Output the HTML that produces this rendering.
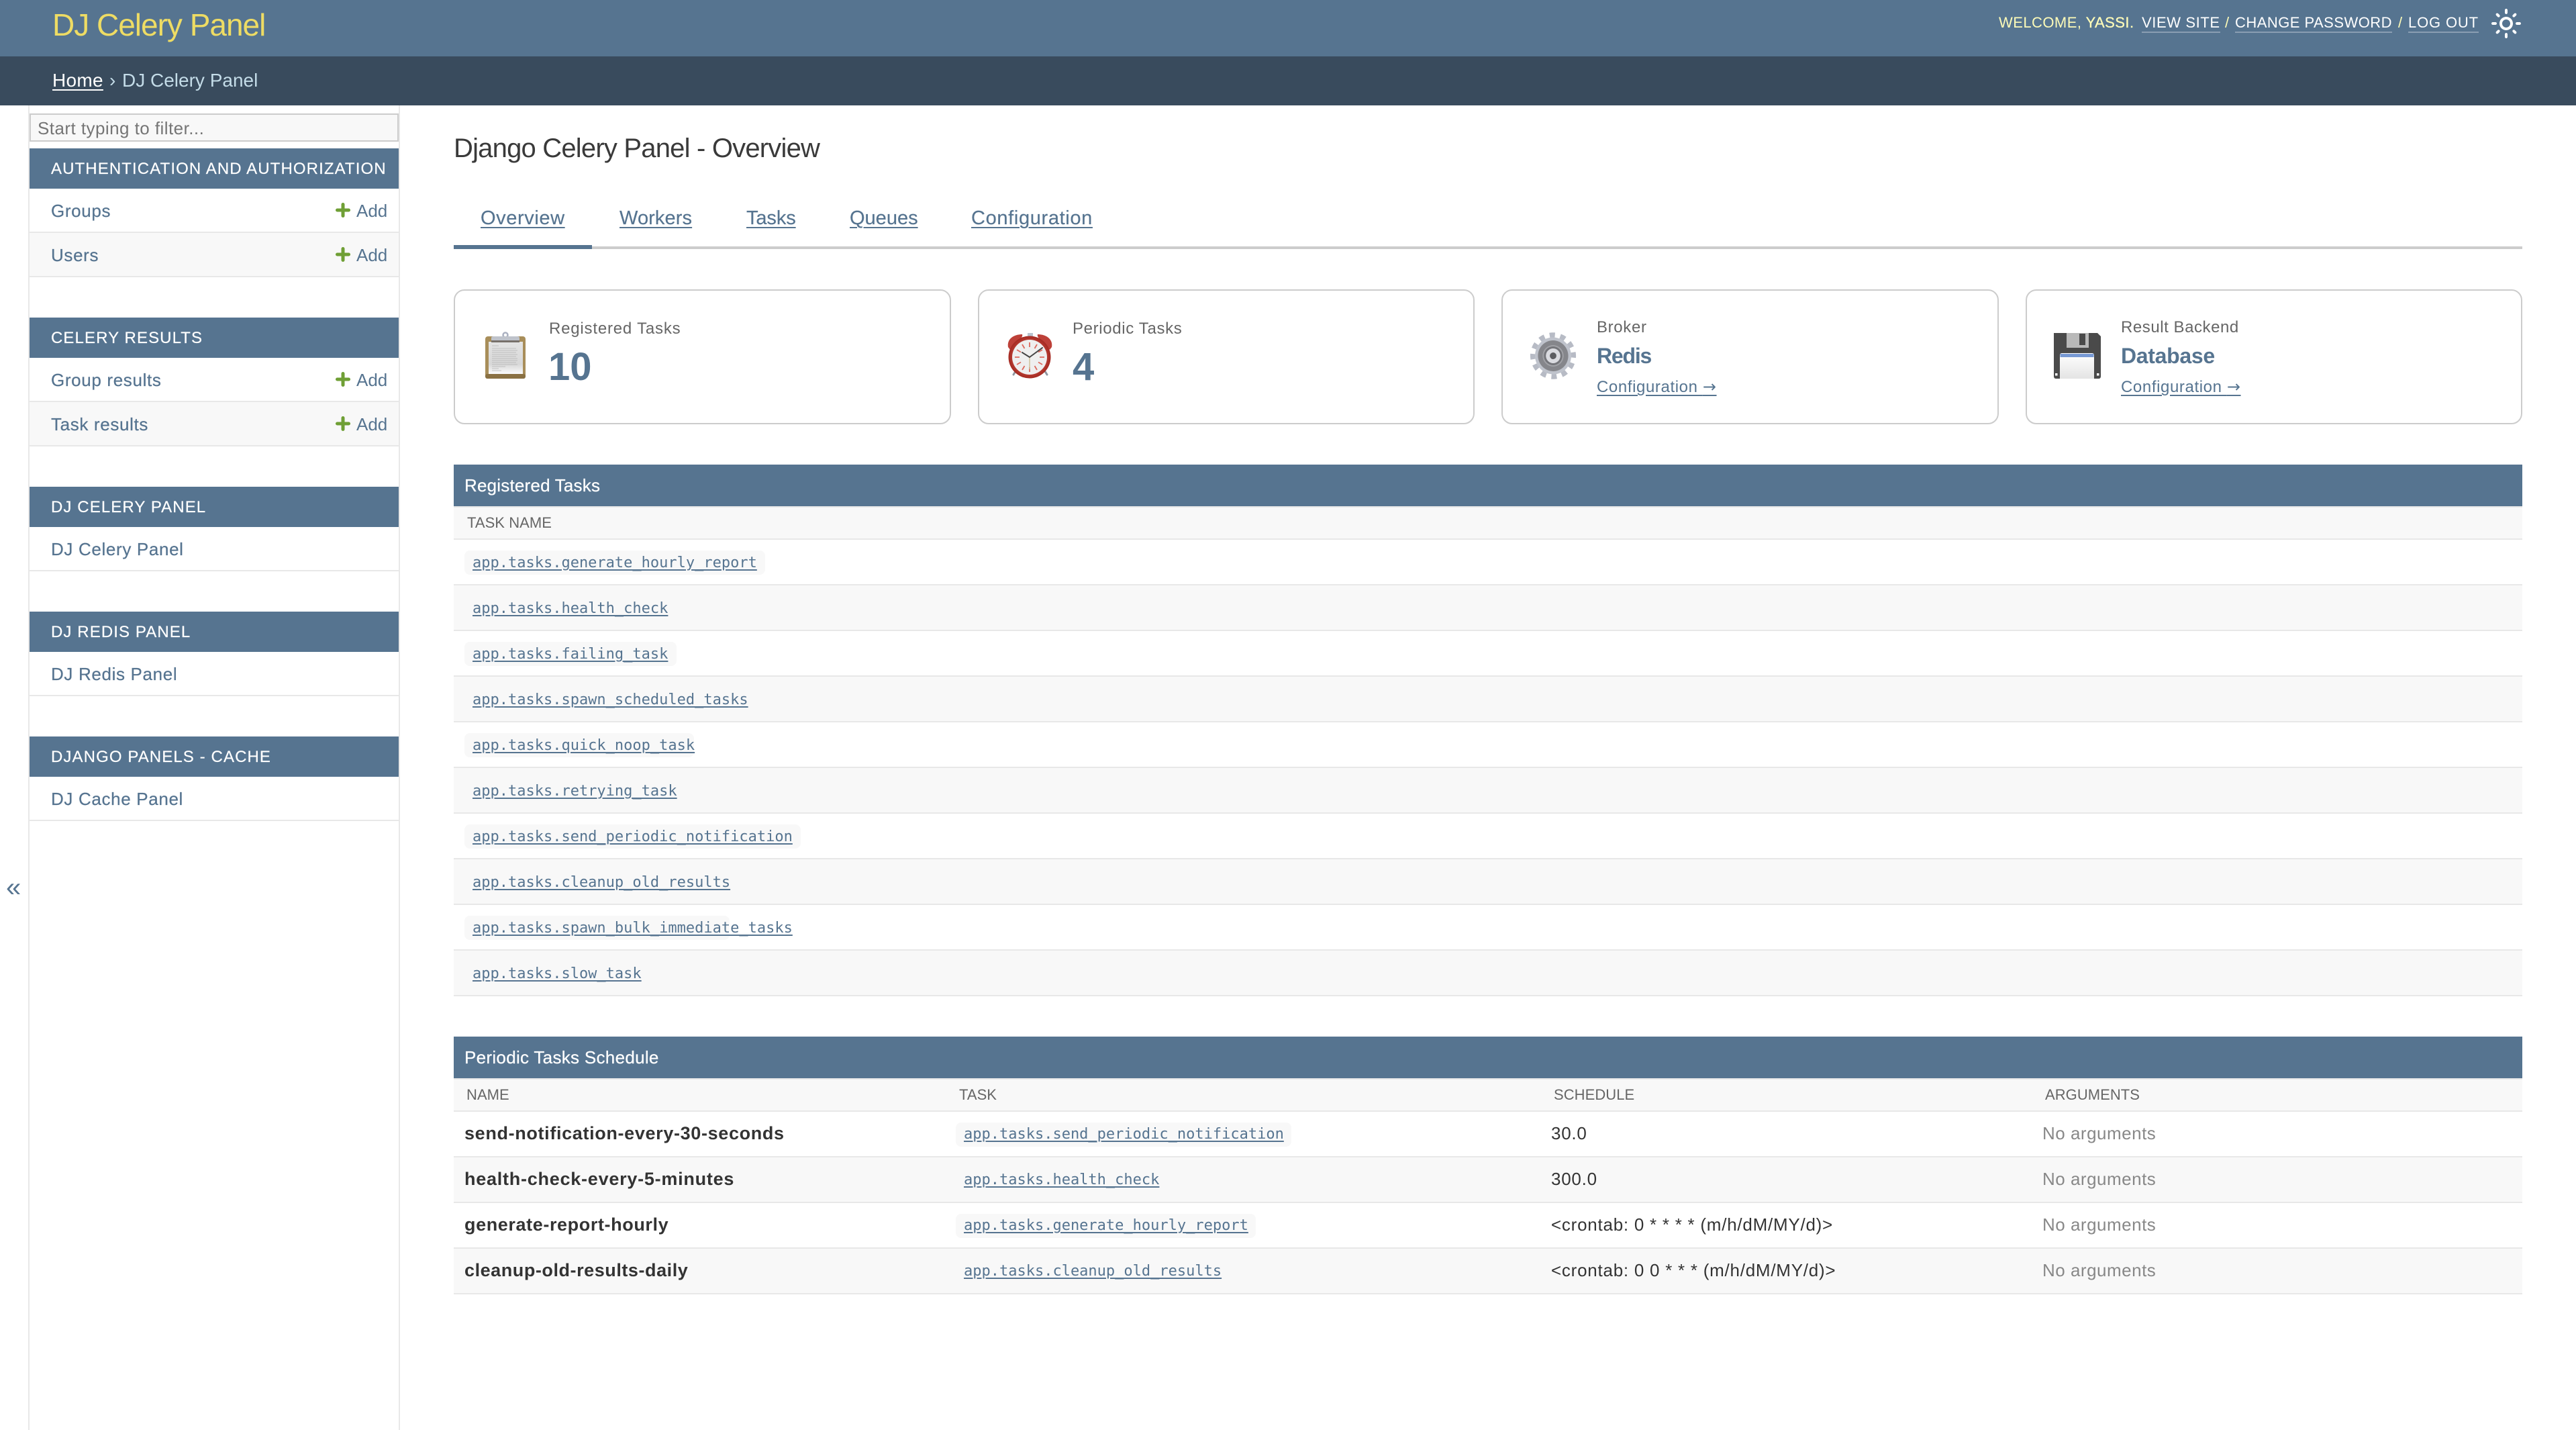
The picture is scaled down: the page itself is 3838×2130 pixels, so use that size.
<!DOCTYPE html>
<html lang="en"><head><meta charset="utf-8"><title>DJ Celery Panel</title>
<style>
html,body{margin:0;padding:0;width:3838px;height:2130px;overflow:hidden;background:#fff}
body{position:relative;font-family:"Liberation Sans",Arial,sans-serif;color:#333}
a{color:#567490;text-decoration:none}
.t{position:absolute;white-space:nowrap;line-height:1}
.b{position:absolute}
.hd{background:#567490}
.s{font-size:26px;letter-spacing:.65px;-webkit-text-stroke:.25px #567490}
.cap{color:#fff;font-size:24px;letter-spacing:1.1px;-webkit-text-stroke:.2px #fff}
.add{font-size:26px}
.tab{font-size:29px;text-decoration:underline;text-underline-offset:4px;text-decoration-thickness:2px;-webkit-text-stroke:.2px #567490}
.lab{font-size:24px;letter-spacing:.65px;color:#666}
.big{font-size:58px;font-weight:700;color:#567490}
.val{font-size:32px;font-weight:700;color:#567490}
.cfg{font-size:24px;letter-spacing:.6px;text-decoration:underline;text-underline-offset:4px;text-decoration-thickness:2px}
.cfg span{font-family:"DejaVu Sans",sans-serif}
.card{position:absolute;top:431px;width:740.5px;height:201px;box-sizing:border-box;border:2px solid #ccc;border-radius:16px;background:#fff}
.tc{color:#fff;font-size:26px;letter-spacing:.2px;-webkit-text-stroke:.25px #fff}
.th{font-size:22px;color:#666;letter-spacing:.05px}
.row{position:absolute;left:676px;width:3082px;height:66px;border-bottom:2px solid #e8e8e8}
.alt{background:#f8f8f8}
.srow{position:absolute;left:44px;width:550px;height:64px;border-bottom:2px solid #e8e8e8}
.chip{position:absolute;height:36px;border-radius:8px;background:#f8f8f8}
.m{font-family:"DejaVu Sans Mono","Liberation Mono",monospace;font-size:22px;text-decoration:underline;text-underline-offset:3px;text-decoration-thickness:2px}
.nm{font-size:27px;font-weight:700;letter-spacing:.6px;color:#333}
.sc{font-size:26px;letter-spacing:.75px;color:#333}
.ar{font-size:26px;letter-spacing:.5px;color:#888}
.top{font-size:22px;color:#fff;height:22px;padding-bottom:2px;border-bottom:2px solid #8a9eb2}
.wel{font-size:22px;color:#fdfbb8}
svg{position:absolute;overflow:visible}
</style></head><body>

<div class="b hd" style="left:0;top:0;width:3838px;height:84px"></div>
<div class="b" style="left:0;top:84px;width:3838px;height:73px;background:#394b5d"></div>
<div class="t" style="left:78px;top:14px;font-size:46px;letter-spacing:-1px;color:#eedc64">DJ Celery Panel</div>

<div class="t wel" style="left:2978px;top:23px;letter-spacing:.45px">WELCOME, <b style="font-weight:400;-webkit-text-stroke:.3px #fdfbb8">YASSI.</b></div>
<a class="t top" href="#" style="left:3191px;top:23px;letter-spacing:.6px">VIEW SITE</a>
<div class="t wel" style="left:3315px;top:23px">/</div>
<a class="t top" href="#" style="left:3330px;top:23px;letter-spacing:.47px">CHANGE PASSWORD</a>
<div class="t wel" style="left:3573px;top:23px">/</div>
<a class="t top" href="#" style="left:3588px;top:23px;letter-spacing:.85px">LOG OUT</a>
<svg style="left:3710px;top:11px" width="48" height="48" viewBox="0 0 24 24" fill="#fff"><path d="M12 9c1.65 0 3 1.35 3 3s-1.35 3-3 3-3-1.35-3-3 1.35-3 3-3m0-2c-2.76 0-5 2.24-5 5s2.24 5 5 5 5-2.24 5-5-2.24-5-5-5zM2 13h2c.55 0 1-.45 1-1s-.45-1-1-1H2c-.55 0-1 .45-1 1s.45 1 1 1zm18 0h2c.55 0 1-.45 1-1s-.45-1-1-1h-2c-.55 0-1 .45-1 1s.45 1 1 1zM11 2v2c0 .55.45 1 1 1s1-.45 1-1V2c0-.55-.45-1-1-1s-1 .45-1 1zm0 18v2c0 .55.45 1 1 1s1-.45 1-1v-2c0-.55-.45-1-1-1s-1 .45-1 1zM5.99 4.58c-.39-.39-1.03-.39-1.41 0-.39.39-.39 1.03 0 1.41l1.06 1.06c.39.39 1.03.39 1.41 0s.39-1.03 0-1.41L5.99 4.58zm12.37 12.37c-.39-.39-1.03-.39-1.41 0-.39.39-.39 1.03 0 1.41l1.06 1.06c.39.39 1.03.39 1.41 0 .39-.39.39-1.03 0-1.41l-1.06-1.06zm1.06-10.96c.39-.39.39-1.03 0-1.41-.39-.39-1.03-.39-1.41 0l-1.06 1.06c-.39.39-.39 1.03 0 1.41s1.03.39 1.41 0l1.06-1.06zM7.05 18.36c.39-.39.39-1.03 0-1.41-.39-.39-1.03-.39-1.41 0l-1.06 1.06c-.39.39-.39 1.03 0 1.41s1.03.39 1.41 0l1.06-1.06z"/></svg>

<a class="t" href="#" style="left:78px;top:106px;font-size:28px;letter-spacing:.3px;color:#fff;text-decoration:underline;text-underline-offset:4px;text-decoration-thickness:2px">Home</a>
<div class="t" style="left:163px;top:106px;font-size:28px;color:#c4dce8">›</div>
<div class="t" style="left:182px;top:106px;font-size:28px;color:#c4dce8">DJ Celery Panel</div>

<!-- sidebar -->
<div class="b" style="left:42px;top:157px;width:2px;height:1973px;background:#e8e8e8"></div>
<div class="b" style="left:594px;top:157px;width:2px;height:1973px;background:#e8e8e8"></div>
<div class="b" style="left:44px;top:169px;width:550px;height:42px;box-sizing:border-box;border:2px solid #ccc;background:#f8f8f8"></div>
<div class="t" style="left:56px;top:178px;font-size:26px;letter-spacing:.45px;color:#757575">Start typing to filter...</div>

<div class="b hd" style="left:44px;top:221px;width:550px;height:60px"></div>
<div class="t cap" style="left:76px;top:240px">AUTHENTICATION AND AUTHORIZATION</div>
<div class="srow" style="top:281px"></div>
<a class="t s" href="#" style="left:76px;top:301px">Groups</a>
<svg style="left:500px;top:302px" width="22" height="22"><path d="M11 2.500v17M2.500 11h17" stroke="#6f9f35" stroke-width="5" stroke-linecap="round" fill="none"/></svg>
<a class="t add" href="#" style="left:531px;top:301px">Add</a>
<div class="srow alt" style="top:347px"></div>
<a class="t s" href="#" style="left:76px;top:367px">Users</a>
<svg style="left:500px;top:368px" width="22" height="22"><path d="M11 2.500v17M2.500 11h17" stroke="#6f9f35" stroke-width="5" stroke-linecap="round" fill="none"/></svg>
<a class="t add" href="#" style="left:531px;top:367px">Add</a>

<div class="b hd" style="left:44px;top:473px;width:550px;height:60px"></div>
<div class="t cap" style="left:76px;top:492px">CELERY RESULTS</div>
<div class="srow" style="top:533px"></div>
<a class="t s" href="#" style="left:76px;top:553px">Group results</a>
<svg style="left:500px;top:554px" width="22" height="22"><path d="M11 2.500v17M2.500 11h17" stroke="#6f9f35" stroke-width="5" stroke-linecap="round" fill="none"/></svg>
<a class="t add" href="#" style="left:531px;top:553px">Add</a>
<div class="srow alt" style="top:599px"></div>
<a class="t s" href="#" style="left:76px;top:619px">Task results</a>
<svg style="left:500px;top:620px" width="22" height="22"><path d="M11 2.500v17M2.500 11h17" stroke="#6f9f35" stroke-width="5" stroke-linecap="round" fill="none"/></svg>
<a class="t add" href="#" style="left:531px;top:619px">Add</a>

<div class="b hd" style="left:44px;top:725px;width:550px;height:60px"></div>
<div class="t cap" style="left:76px;top:744px">DJ CELERY PANEL</div>
<div class="srow" style="top:785px"></div>
<a class="t s" href="#" style="left:76px;top:805px">DJ Celery Panel</a>

<div class="b hd" style="left:44px;top:911px;width:550px;height:60px"></div>
<div class="t cap" style="left:76px;top:930px">DJ REDIS PANEL</div>
<div class="srow" style="top:971px"></div>
<a class="t s" href="#" style="left:76px;top:991px">DJ Redis Panel</a>

<div class="b hd" style="left:44px;top:1097px;width:550px;height:60px"></div>
<div class="t cap" style="left:76px;top:1116px">DJANGO PANELS - CACHE</div>
<div class="srow" style="top:1157px"></div>
<a class="t s" href="#" style="left:76px;top:1177px">DJ Cache Panel</a>

<a class="t" href="#" style="left:9px;top:1302px;font-size:40px;color:#567490">«</a>

<!-- main -->
<div class="t" style="left:676px;top:201px;font-size:40px;letter-spacing:-.8px;color:#3a3a3a">Django Celery Panel - Overview</div>

<div class="b" style="left:676px;top:367px;width:3082px;height:4px;background:#ccc"></div>
<div class="b hd" style="left:676px;top:365px;width:206px;height:6px"></div>
<a class="t tab" href="#" style="left:716px;top:311px;letter-spacing:.6px">Overview</a>
<a class="t tab" href="#" style="left:923px;top:311px;letter-spacing:.1px">Workers</a>
<a class="t tab" href="#" style="left:1112px;top:311px;letter-spacing:-.1px">Tasks</a>
<a class="t tab" href="#" style="left:1266px;top:311px">Queues</a>
<a class="t tab" href="#" style="left:1447px;top:311px;letter-spacing:.65px">Configuration</a>

<div class="card" style="left:676px"></div>
<div class="card" style="left:1456.5px"></div>
<div class="card" style="left:2237px"></div>
<div class="card" style="left:3017.5px"></div>

<!-- clipboard -->
<svg style="left:723px;top:495px" width="60" height="70" viewBox="0 0 60 70">
<defs><linearGradient id="p" x1="0" y1="0" x2="0" y2="1"><stop offset="0" stop-color="#e4e4e4"/><stop offset=".7" stop-color="#d8d8d8"/><stop offset="1" stop-color="#fbfbfb"/></linearGradient></defs>
<rect x="0" y="6" width="60" height="63" rx="4" fill="#a88e5a"/>
<rect x="0" y="62" width="60" height="7" rx="3" fill="#8a7143"/>
<rect x="5" y="14" width="51" height="48" fill="url(#p)"/>
<circle cx="30" cy="4" r="3.500" fill="none" stroke="#aab0c0" stroke-width="2.500"/>
<path d="M9 8q0-2 4-2h34q4 0 4 2v5H9z" fill="#bfc3cb"/>
<rect x="9" y="12" width="42" height="3" fill="#77706a"/>
<path d="M10 20h10M10 24h36M10 27h38M10 30h36M10 33h38M10 36h36M10 39h38M10 42h38M10 45h36M10 48h38M10 51h20M10 54h10M10 57h14" stroke="#b4b4b4" stroke-width=".8"/>
</svg>

<!-- clock -->
<svg style="left:1501px;top:495px" width="68" height="68" viewBox="0 0 68 68">
<defs><radialGradient id="r" cx=".5" cy=".5" r=".5"><stop offset=".8" stop-color="#b73c32"/><stop offset="1" stop-color="#a42a22"/></radialGradient></defs>
<path d="M14 55l-5 8M54 55l5 8" stroke="#8f96a0" stroke-width="3" stroke-linecap="round"/>
<rect x="30" y="1" width="8" height="8" fill="#b9c4d0"/>
<path d="M1 22C-1 11 8 3 22 3c2 5-8 11-18 23z" fill="#bd4038"/>
<path d="M66 22C68 11 59 3 45 3c-2 5 8 11 18 23z" fill="#bd4038"/>
<circle cx="33" cy="37" r="31.500" fill="url(#r)"/>
<circle cx="33" cy="37" r="26" fill="#efefef"/>
<path d="M33 15v7M33 52v7M11 37h7M48 37h7M22 18l3.500 6M44 18l-3.500 6M14 26l6 3.500M52 26l-6 3.500M14 48l6-3.500M52 48l-6-3.500M22 56l3.500-6M44 56l-3.500-6" stroke="#dd6a5e" stroke-width="1.800"/>
<path d="M33 37v18" stroke="#cfc29a" stroke-width="1.500"/>
<path d="M33 37L22 30M33 37L52 23" stroke="#444" stroke-width="2" stroke-linecap="round"/>
</svg>

<!-- gear -->
<svg style="left:2279px;top:496px" width="70" height="68" viewBox="0 0 70 68">
<g transform="translate(35 34) rotate(-10) scale(.98 1)">
<circle r="31" fill="none" stroke="#b7bbc5" stroke-width="7.500" stroke-dasharray="8.100 8.130"/>
<circle r="27.500" fill="#bfc3cc"/>
<circle r="23" fill="#85868b"/>
<circle r="16" fill="#a0a1a6"/>
<circle r="14" fill="#74757a"/>
<circle r="11" fill="#dadbe0"/>
<circle r="5" fill="#5c5d61"/>
</g>
</svg>

<!-- floppy -->
<svg style="left:3060px;top:496px" width="70" height="68" viewBox="0 0 70 68">
<defs><linearGradient id="l" x1="0" y1="0" x2="0" y2="1"><stop offset="0" stop-color="#fff"/><stop offset="1" stop-color="#e4e4e4"/></linearGradient></defs>
<path d="M0 0h65l5 5v60a3 3 0 0 1-3 3H3a3 3 0 0 1-3-3z" fill="#4a4a4a"/>
<rect x="19" y="0" width="33" height="22" fill="#b9b9b9"/>
<rect x="38" y="1" width="9" height="17" fill="#4a4a4a"/>
<path d="M9 68V33q0-3 3-3h45q3 0 3 3v35z" fill="url(#l)"/>
<rect x="9.500" y="31" width="50" height="5" fill="#7799d4"/>
<rect x="2" y="60" width="3.500" height="3.500" fill="#fff"/>
<rect x="64" y="60" width="3.500" height="3.500" fill="#fff"/>
</svg>

<div class="t lab" style="left:818px;top:478px;letter-spacing:.8px">Registered Tasks</div>
<div class="t big" style="left:817px;top:518px">10</div>
<div class="t lab" style="left:1598px;top:478px">Periodic Tasks</div>
<div class="t big" style="left:1598px;top:518px">4</div>
<div class="t lab" style="left:2379px;top:476px">Broker</div>
<div class="t val" style="left:2379px;top:514px;letter-spacing:-1.2px">Redis</div>
<a class="t cfg" href="#" style="left:2379px;top:564px">Configuration <span>→</span></a>
<div class="t lab" style="left:3160px;top:476px;letter-spacing:.55px">Result Backend</div>
<div class="t val" style="left:3160px;top:514px;letter-spacing:-.3px">Database</div>
<a class="t cfg" href="#" style="left:3160px;top:564px">Configuration <span>→</span></a>

<!-- registered tasks -->
<div class="b hd" style="left:676px;top:692px;width:3082px;height:62px"></div>
<div class="t tc" style="left:692px;top:710px">Registered Tasks</div>
<div class="row alt" style="top:754px;height:46px;border-top:2px solid #e8e8e8"></div>
<div class="t th" style="left:696px;top:768px">TASK NAME</div>

<div class="row" style="top:804px"></div>
<div class="row alt" style="top:872px"></div>
<div class="row" style="top:940px"></div>
<div class="row alt" style="top:1008px"></div>
<div class="row" style="top:1076px"></div>
<div class="row alt" style="top:1144px"></div>
<div class="row" style="top:1212px"></div>
<div class="row alt" style="top:1280px"></div>
<div class="row" style="top:1348px"></div>
<div class="row alt" style="top:1416px"></div>

<div class="chip" style="left:692px;top:820px;width:448px"></div>
<div class="chip" style="left:692px;top:956px;width:316px"></div>
<div class="chip" style="left:692px;top:1092px;width:342px"></div>
<div class="chip" style="left:692px;top:1228px;width:501px"></div>
<div class="chip" style="left:692px;top:1364px;width:395px"></div>

<a class="t m" href="#" style="left:704px;top:828px">app.tasks.generate_hourly_report</a>
<a class="t m" href="#" style="left:704px;top:896px">app.tasks.health_check</a>
<a class="t m" href="#" style="left:704px;top:964px">app.tasks.failing_task</a>
<a class="t m" href="#" style="left:704px;top:1032px">app.tasks.spawn_scheduled_tasks</a>
<a class="t m" href="#" style="left:704px;top:1100px">app.tasks.quick_noop_task</a>
<a class="t m" href="#" style="left:704px;top:1168px">app.tasks.retrying_task</a>
<a class="t m" href="#" style="left:704px;top:1236px">app.tasks.send_periodic_notification</a>
<a class="t m" href="#" style="left:704px;top:1304px">app.tasks.cleanup_old_results</a>
<a class="t m" href="#" style="left:704px;top:1372px">app.tasks.spawn_bulk_immediate_tasks</a>
<a class="t m" href="#" style="left:704px;top:1440px">app.tasks.slow_task</a>

<!-- periodic -->
<div class="b hd" style="left:676px;top:1544px;width:3082px;height:62px"></div>
<div class="t tc" style="left:692px;top:1562px;letter-spacing:.3px">Periodic Tasks Schedule</div>
<div class="row alt" style="top:1606px;height:46px;border-top:2px solid #e8e8e8"></div>
<div class="t th" style="left:695px;top:1620px">NAME</div>
<div class="t th" style="left:1429px;top:1620px">TASK</div>
<div class="t th" style="left:2315px;top:1620px">SCHEDULE</div>
<div class="t th" style="left:3047px;top:1620px">ARGUMENTS</div>

<div class="row" style="top:1656px"></div>
<div class="row alt" style="top:1724px"></div>
<div class="row" style="top:1792px"></div>
<div class="row alt" style="top:1860px"></div>

<div class="chip" style="left:1424px;top:1672px;width:500px"></div>
<div class="chip" style="left:1424px;top:1808px;width:447px"></div>

<div class="t nm" style="left:692px;top:1675px;letter-spacing:.65px">send-notification-every-30-seconds</div>
<div class="t nm" style="left:692px;top:1743px;letter-spacing:.75px">health-check-every-5-minutes</div>
<div class="t nm" style="left:692px;top:1811px">generate-report-hourly</div>
<div class="t nm" style="left:692px;top:1879px;letter-spacing:.55px">cleanup-old-results-daily</div>

<a class="t m" href="#" style="left:1436px;top:1679px">app.tasks.send_periodic_notification</a>
<a class="t m" href="#" style="left:1436px;top:1747px">app.tasks.health_check</a>
<a class="t m" href="#" style="left:1436px;top:1815px">app.tasks.generate_hourly_report</a>
<a class="t m" href="#" style="left:1436px;top:1883px">app.tasks.cleanup_old_results</a>

<div class="t sc" style="left:2311px;top:1675px">30.0</div>
<div class="t sc" style="left:2311px;top:1743px">300.0</div>
<div class="t sc" style="left:2311px;top:1811px">&lt;crontab: 0 * * * * (m/h/dM/MY/d)&gt;</div>
<div class="t sc" style="left:2311px;top:1879px">&lt;crontab: 0 0 * * * (m/h/dM/MY/d)&gt;</div>

<div class="t ar" style="left:3043px;top:1675px">No arguments</div>
<div class="t ar" style="left:3043px;top:1743px">No arguments</div>
<div class="t ar" style="left:3043px;top:1811px">No arguments</div>
<div class="t ar" style="left:3043px;top:1879px">No arguments</div>

</body></html>
